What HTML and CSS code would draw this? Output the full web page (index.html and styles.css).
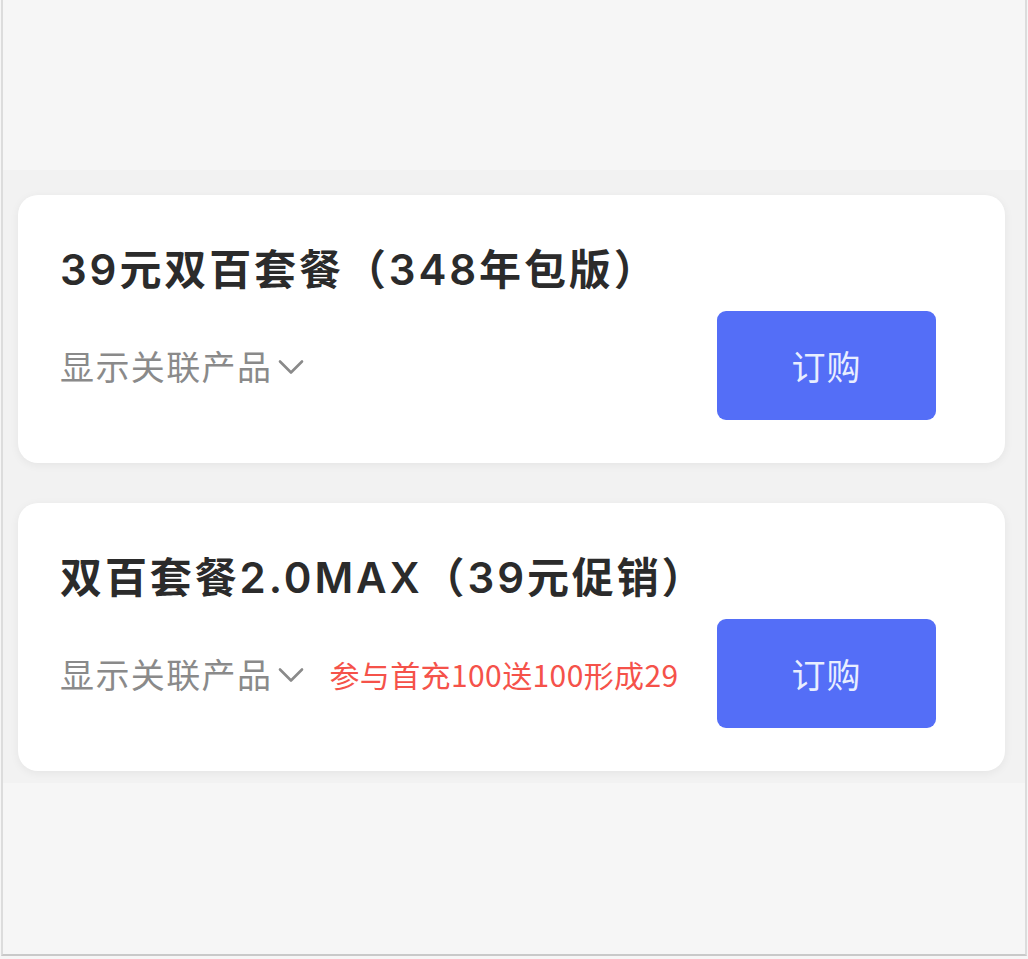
FILE: index.html
```html
<!DOCTYPE html>
<html lang="zh-CN">
<head>
<meta charset="utf-8">
<title>套餐</title>
<link rel="stylesheet" href="styles.css">
</head>
<body>
<div class="frame">
  <div class="top-space"></div>
  <div class="band">
    <div class="card">
      <div class="title">39元双百套餐（348年包版）</div>
      <div class="row">
        <div class="left">
          <span class="related">显示关联产品<svg class="chev" width="26" height="16" viewBox="0 0 26 16"><path d="M2 2.5 L13 13.5 L24 2.5" fill="none" stroke="#8a8a8a" stroke-width="2.6" stroke-linecap="round" stroke-linejoin="round"/></svg></span>
        </div>
        <button class="buy">订购</button>
      </div>
    </div>
    <div class="card">
      <div class="title">双百套餐2.0MAX（39元促销）</div>
      <div class="row">
        <div class="left">
          <span class="related">显示关联产品<svg class="chev" width="26" height="16" viewBox="0 0 26 16"><path d="M2 2.5 L13 13.5 L24 2.5" fill="none" stroke="#8a8a8a" stroke-width="2.6" stroke-linecap="round" stroke-linejoin="round"/></svg></span>
          <span class="promo">参与首充100送100形成29</span>
        </div>
        <button class="buy">订购</button>
      </div>
    </div>
  </div>
</div>
</body>
</html>
```
FILE: styles.css
```css
html, body {
  margin: 0;
  padding: 0;
  background: #f6f6f6;
}
body {
  font-family: "Noto Sans CJK SC", "Noto Sans", sans-serif;
}
.frame {
  box-sizing: border-box;
  margin-left: 1px;
  width: 1026px;
  height: 956px;
  border-left: 2px solid #dcdcdc;
  border-right: 2px solid #dcdcdc;
  border-bottom: 2px solid #c9c9c9;
  background: #f6f6f6;
}
.top-space {
  height: 170px;
}
.band {
  background: #f2f2f2;
  padding: 25px 20px 12px 15px;
  display: flex;
  flex-direction: column;
  gap: 40px;
}
.card {
  background: #ffffff;
  border-radius: 20px;
  box-shadow: 0 2px 10px rgba(0, 0, 0, 0.06);
  padding: 50px 69px 43px 42px;
  display: flex;
  flex-direction: column;
  gap: 16px;
}
.title {
  font-family: "Inter", "Noto Sans CJK SC", sans-serif;
  font-size: 42px;
  line-height: 50px;
  font-weight: 600;
  color: #2b2b2b;
  letter-spacing: 2.9px;
}
.row {
  display: flex;
  align-items: center;
  justify-content: space-between;
}
.left {
  display: flex;
  align-items: center;
  gap: 25px;
}
.related {
  display: flex;
  align-items: center;
  font-size: 34px;
  line-height: 40px;
  color: #8a8a8a;
  letter-spacing: 1.4px;
  gap: 6px;
}
.chev {
  display: block;
  margin-top: 2px;
}
.promo {
  font-size: 30px;
  line-height: 40px;
  color: #f5524a;
  letter-spacing: 0.4px;
}
.buy {
  width: 219px;
  height: 109px;
  border: none;
  border-radius: 9px;
  background: #546ef7;
  color: #e8eeff;
  font-family: "Noto Sans CJK SC", sans-serif;
  font-size: 34px;
  letter-spacing: 1px;
  padding: 0;
}
```
